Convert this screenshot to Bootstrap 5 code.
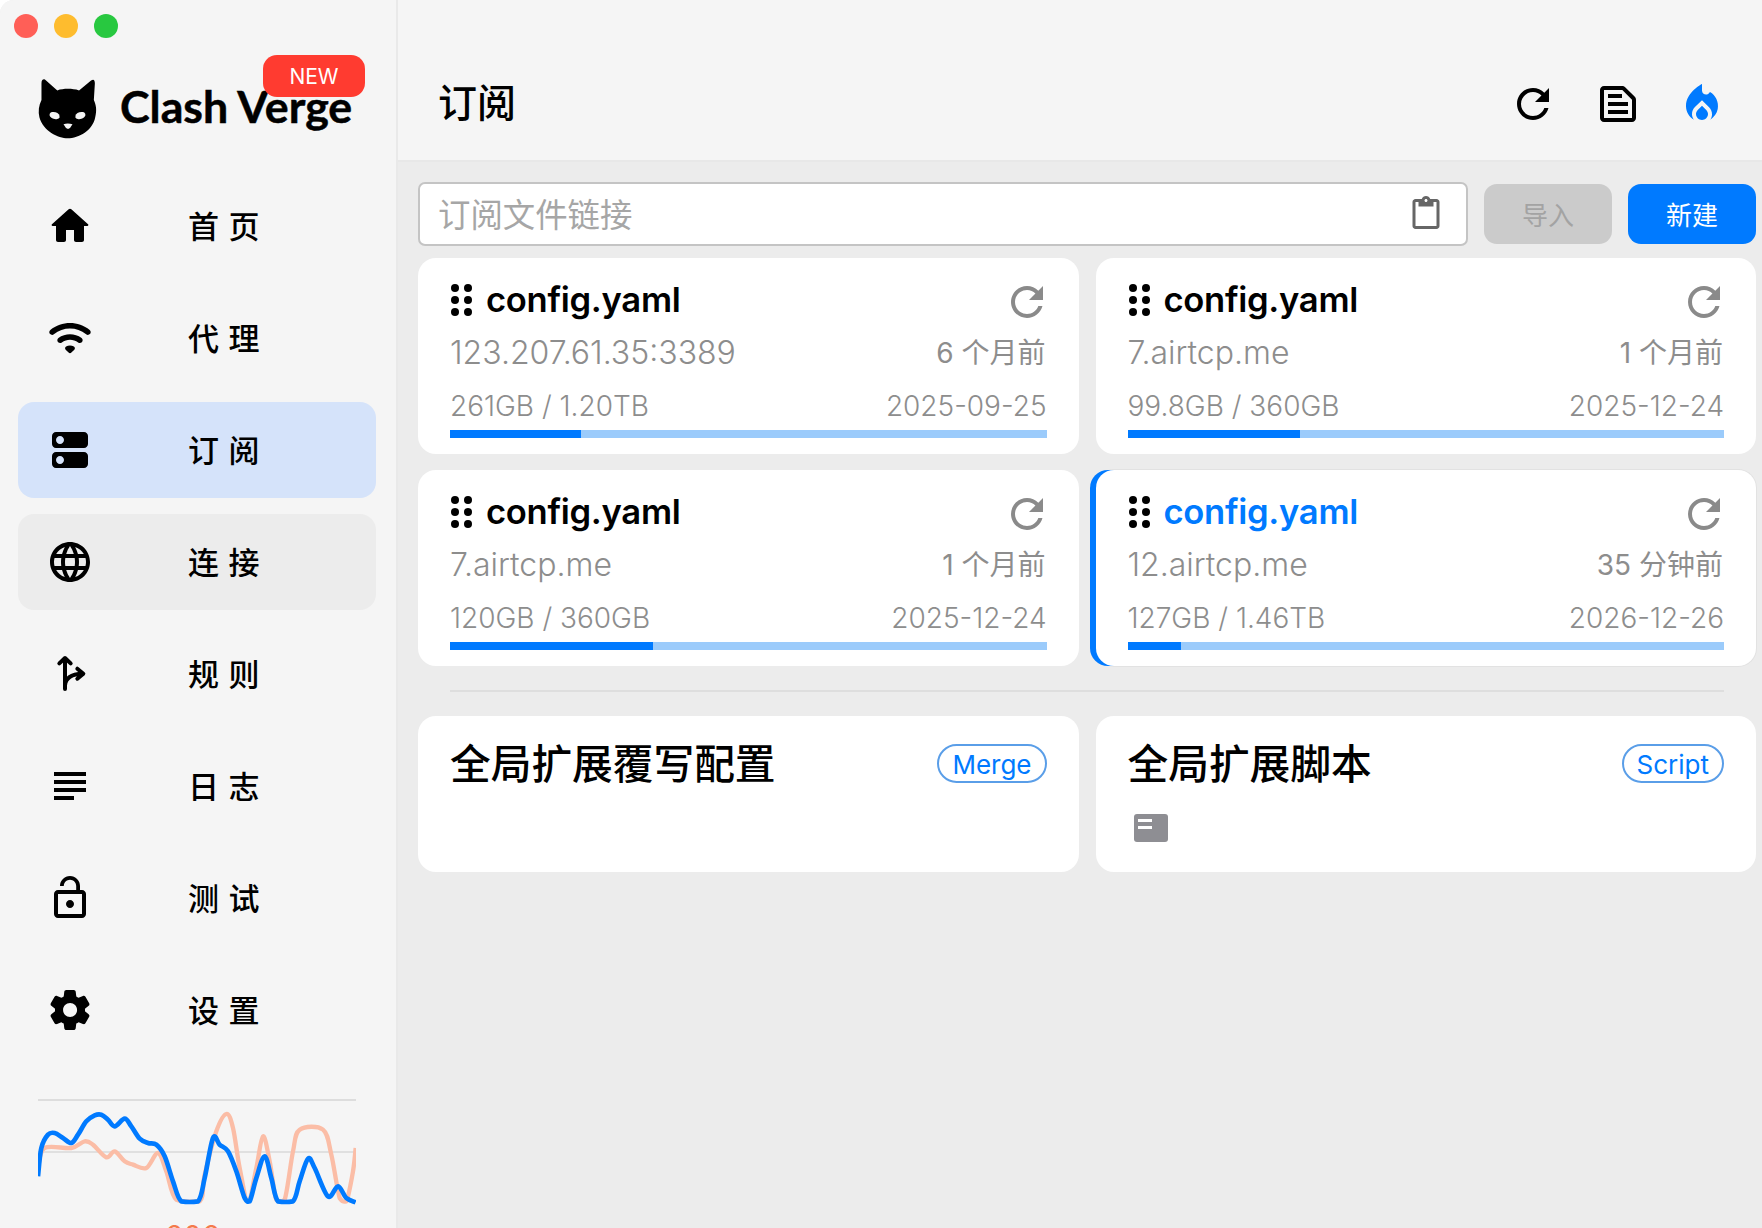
<!DOCTYPE html>
<html lang="zh-CN">
<head>
<meta charset="utf-8">
<title>Clash Verge</title>
<link href="https://cdn.jsdelivr.net/npm/bootstrap@5.3.0/dist/css/bootstrap.min.css" rel="stylesheet">
<style>
html,body{height:100%;margin:0;overflow:hidden;background:#fff}
body{font-family:Inter,"Noto Sans CJK SC",sans-serif;color:#000}
.app-shell{width:1762px;height:1228px;background:#ececec;border-top-left-radius:14px;overflow:hidden}
.side-pane{width:398px;flex:0 0 398px;background:#f5f5f5;border-right:2px solid #e9e9e9;padding:0 20px 0 18px;overflow:hidden}
.side-pane>*{flex-shrink:0}
.traffic{gap:16px;padding:14px 0 0 0;margin-left:-4px}
.traffic i{display:block;width:24px;height:24px;border-radius:50%}
.tl-r{background:#ff5f57}.tl-y{background:#febc2e}.tl-g{background:#28c840}
.brand-row{position:relative;height:140px;padding-top:40px;gap:21px;margin-left:19px}
.brand-name{font-family:Lato,sans-serif;font-weight:700;font-size:44.7px;line-height:56px;letter-spacing:0;white-space:nowrap;margin-top:0;-webkit-text-stroke:.5px #000}
.new-flag{position:absolute;left:226px;top:17px;width:102px;height:42px;border-radius:14px;background:#ff3b30;color:#fff;font-size:21px;line-height:44px;text-align:center}
.nav-stack{gap:16px}
.nav-entry{height:96px;border-radius:16px;padding-left:28px;color:#000;text-decoration:none}
.nav-entry.is-on{background:#d5e3fa}
.nav-entry.is-hover{background:#ececec}
.nav-entry svg{width:48px;height:48px;flex:0 0 48px}
.nav-label{margin:-2px 0 0 94px;font-family:"Noto Sans CJK SC",sans-serif;font-size:31px;font-weight:500;letter-spacing:9.5px;white-space:nowrap;line-height:40px}
.graph-box{margin:41px 20px 0 20px;border-top:2px solid #ddd;height:125px;position:relative}
.graph-box svg{display:block;width:318px;height:122px}
.rate-num{color:#f47a4b;font-size:28px;line-height:28px;margin-top:-2px;text-align:center;letter-spacing:1px;margin-left:-8px}
.top-bar{height:162px;background:#f5f5f5;border-bottom:2px solid #e8e8e8;padding:77px 32px 0 41px}
.top-row{height:54px}
.page-name{font-family:"Noto Sans CJK SC",sans-serif;font-size:39px;font-weight:500;line-height:54px;margin:-8px 0 0 -1px}
.top-tools{gap:36.5px;margin-right:4px}
.top-tools svg{width:48px;height:48px}
.work-pane{padding:20px 6px 0 20px}
.url-row{gap:16px}
.url-box{flex:1 1 auto;height:64px;background:#fff;border:2px solid #c4c4c4;border-radius:7px;padding:0 22px 0 18px}
.url-box input{border:0;outline:0;background:transparent;font-family:"Noto Sans CJK SC",sans-serif;font-size:32.4px;width:100%;padding:0 0 2px;color:#000}
.url-box input::placeholder{color:#a6a6a6;opacity:1}
.url-box svg{width:36px;height:36px;flex:0 0 36px}
.act-btn{width:128px;height:60px;flex:0 0 128px;border:0;border-radius:13px;font-family:"Noto Sans CJK SC",sans-serif;font-size:26px;padding:0;line-height:60px}
.act-btn.off-btn,.act-btn.off-btn:disabled{background:#cbcbcb;color:#a3a3a3;opacity:1}
.act-btn.new-btn{background:#007aff;color:#fff}
.deck{--bs-gutter-x:17px;--bs-gutter-y:16px}
.deck-wrap{margin-top:12px}
.sub-tile{background:#fff;border:0;border-radius:18px;height:196px;padding:20px 32px 0 32px}
.sub-tile.is-current{box-shadow:-6px 0 0 #007aff,0 0 0 1px #e2e2e2}
.tile-head{height:48px}
.grip{display:grid;grid-template-columns:8px 8px;gap:4px 5px;width:21px;margin:-5px 14px 0 1px}
.grip i{display:block;width:8px;height:8px;border-radius:50%;background:#000}
.tile-name{font-size:34.6px;font-weight:600;line-height:48px;letter-spacing:-.3px;color:#000;margin-top:-7px}
.is-current .tile-name{color:#007aff}
.tile-head svg{width:48px;height:48px;margin:-1px -4px 0 0}
.tile-l2{margin-top:7px;height:40px;line-height:40px;color:#8d8d8d;font-size:32px;font-weight:300}
.tile-l2 .r{font-size:28px;font-weight:400;margin-right:1px}
.tile-l3{margin-top:15px;height:36px;line-height:36px;color:#8d8d8d;font-size:28px;font-weight:300}
.meter{height:8px;margin-top:6px;background:#9bcbfb;border-radius:0;--bs-progress-bar-bg:#007aff}
.rule-line{height:2px;background:#dedede;margin:24px 32px 24px 32px}
.ext-tile{background:#fff;border-radius:18px;height:156px;padding:24px 32px 0 32px}
.ext-name{font-family:"Noto Sans CJK SC",sans-serif;font-size:40.7px;font-weight:500;line-height:48px;margin-top:-2px}
.chip-tag{border:2px solid #5a9ee8;border-radius:20px;height:39px;line-height:37px;color:#007aff;font-size:26px;font-weight:400;padding:0 13px;background:#fff;margin-top:4px}
.doc-mark{margin:28px 0 0 6px;width:34px;height:28px;display:block}
</style>
</head>
<body>
<div class="app-shell d-flex">
  <aside class="side-pane d-flex flex-column">
    <div class="traffic d-flex"><i class="tl-r"></i><i class="tl-y"></i><i class="tl-g"></i></div>
    <div class="brand-row d-flex align-items-start">
      <svg width="62" height="62" viewBox="23 26 180 180" class="flex-shrink-0" aria-hidden="true">
        <path fill="#000" d="M46 30 Q36 28 36 42 L36 90 C28 105 26 125 30 140 C40 180 85 201 112 201 C145 201 185 178 192 140 C197 120 195 105 188 90 L191 42 Q191 26 180 33 L145 62 C125 56 100 56 82 62 Z"/>
        <ellipse cx="74" cy="135" rx="15" ry="10" fill="#f5f5f5" transform="rotate(18 74 135)"/>
        <ellipse cx="149" cy="135" rx="15" ry="10" fill="#f5f5f5" transform="rotate(-18 149 135)"/>
        <path fill="#f5f5f5" d="M100 160 Q112 156 126 160 Q120 172 113 174 Q106 172 100 160 Z"/>
      </svg>
      <span class="brand-name">Clash Verge</span>
      <span class="new-flag">NEW</span>
    </div>
    <nav class="nav-stack d-flex flex-column">
      <a class="nav-entry d-flex align-items-center" href="#"><svg viewBox="0 0 24 24"><path d="M10 19v-5h4v5c0 .55.45 1 1 1h3c.55 0 1-.45 1-1v-7h1.7c.46 0 .68-.57.33-.87L12.67 3.6c-.38-.34-.96-.34-1.34 0l-8.36 7.53c-.34.3-.13.87.33.87H5v7c0 .55.45 1 1 1h3c.55 0 1-.45 1-1z"/></svg><span class="nav-label">首页</span></a>
      <a class="nav-entry d-flex align-items-center" href="#"><svg viewBox="0 0 24 24"><path d="M2.06 10.06c.51.51 1.32.56 1.87.1 4.67-3.84 11.45-3.84 16.13-.01.56.46 1.38.42 1.89-.09.59-.59.55-1.57-.1-2.1-5.71-4.67-13.97-4.67-19.69 0-.65.52-.7 1.5-.1 2.1zm7.76 7.76l1.47 1.47c.39.39 1.02.39 1.41 0l1.47-1.47c.47-.47.37-1.28-.23-1.59-1.22-.63-2.68-.63-3.91 0-.57.31-.68 1.12-.21 1.59zm-3.73-3.73c.49.49 1.26.54 1.83.13 2.44-1.73 5.72-1.73 8.16 0 .57.4 1.34.36 1.83-.13l.01-.01c.6-.6.56-1.62-.13-2.11-3.44-2.49-8.13-2.49-11.58 0-.69.5-.73 1.51-.12 2.12z"/></svg><span class="nav-label">代理</span></a>
      <a class="nav-entry is-on d-flex align-items-center" href="#"><svg viewBox="0 0 24 24"><path d="M19 13H5c-1.1 0-2 .9-2 2v4c0 1.1.9 2 2 2h14c1.1 0 2-.9 2-2v-4c0-1.1-.9-2-2-2zM7 19c-1.1 0-2-.9-2-2s.9-2 2-2 2 .9 2 2-.9 2-2 2zM19 3H5c-1.1 0-2 .9-2 2v4c0 1.1.9 2 2 2h14c1.1 0 2-.9 2-2V5c0-1.1-.9-2-2-2zM7 9c-1.1 0-2-.9-2-2s.9-2 2-2 2 .9 2 2-.9 2-2 2z"/></svg><span class="nav-label">订阅</span></a>
      <a class="nav-entry is-hover d-flex align-items-center" href="#"><svg viewBox="0 0 24 24"><path d="M11.99 2C6.47 2 2 6.48 2 12s4.47 10 9.99 10C17.52 22 22 17.52 22 12S17.52 2 11.99 2zm6.93 6h-2.95c-.32-1.25-.78-2.45-1.38-3.56 1.84.63 3.37 1.91 4.33 3.56zM12 4.04c.83 1.2 1.48 2.53 1.91 3.96h-3.82c.43-1.43 1.08-2.76 1.91-3.96zM4.26 14C4.1 13.36 4 12.69 4 12s.1-1.36.26-2h3.38c-.08.66-.14 1.32-.14 2s.06 1.34.14 2H4.26zm.82 2h2.95c.32 1.25.78 2.45 1.38 3.56-1.84-.63-3.37-1.9-4.33-3.56zm2.95-8H5.08c.96-1.66 2.49-2.93 4.33-3.56C8.81 5.55 8.35 6.75 8.03 8zM12 19.96c-.83-1.2-1.48-2.53-1.91-3.96h3.82c-.43 1.43-1.08 2.76-1.91 3.96zM14.34 14H9.66c-.09-.66-.16-1.32-.16-2s.07-1.35.16-2h4.68c.09.65.16 1.32.16 2s-.07 1.34-.16 2zm.25 5.56c.6-1.11 1.06-2.31 1.38-3.56h2.95c-.96 1.65-2.49 2.93-4.33 3.56zM16.36 14c.08-.66.14-1.32.14-2s-.06-1.34-.14-2h3.38c.16.64.26 1.31.26 2s-.1 1.36-.26 2h-3.38z"/></svg><span class="nav-label">连接</span></a>
      <a class="nav-entry d-flex align-items-center" href="#"><svg viewBox="18 18 144 144"><path fill="none" stroke="#000" stroke-width="12" stroke-linecap="round" stroke-linejoin="round" d="M58 58 L75 42 L92 58 M75 44 V135 M75 125 C76 102 92 90 128 89 M112 74 L130 89 L112 104"/></svg><span class="nav-label">规则</span></a>
      <a class="nav-entry d-flex align-items-center" href="#"><svg viewBox="0 0 24 24"><path d="M14 17H4v2h10v-2zm6-8H4v2h16V9zM4 15h16v-2H4v2zM4 5v2h16V5H4z"/></svg><span class="nav-label">日志</span></a>
      <a class="nav-entry d-flex align-items-center" href="#"><svg viewBox="0 0 24 24"><path d="M12 17c1.1 0 2-.9 2-2s-.9-2-2-2-2 .9-2 2 .9 2 2 2zm6-9h-1V6c0-2.76-2.24-5-5-5S7 3.24 7 6h1.9c0-1.71 1.39-3.1 3.1-3.1 1.71 0 3.1 1.39 3.1 3.1v2H6c-1.1 0-2 .9-2 2v10c0 1.1.9 2 2 2h12c1.1 0 2-.9 2-2V10c0-1.1-.9-2-2-2zm0 12H6V10h12v10z"/></svg><span class="nav-label">测试</span></a>
      <a class="nav-entry d-flex align-items-center" href="#"><svg viewBox="0 0 24 24"><path d="M19.5 12c0-.23-.01-.45-.03-.68l1.86-1.41c.4-.3.51-.86.26-1.3l-1.87-3.23c-.25-.44-.79-.62-1.25-.42l-2.15.91c-.37-.26-.76-.49-1.17-.68l-.29-2.31c-.06-.5-.49-.88-.99-.88h-3.73c-.51 0-.94.38-1 .88l-.29 2.31c-.41.19-.8.42-1.17.68l-2.15-.91c-.46-.2-1-.02-1.25.42L2.41 8.62c-.25.44-.14.99.26 1.3l1.86 1.41c-.02.22-.03.44-.03.67s.01.45.03.68l-1.86 1.41c-.4.3-.51.86-.26 1.3l1.87 3.23c.25.44.79.62 1.25.42l2.15-.91c.37.26.76.49 1.17.68l.29 2.31c.06.5.49.88.99.88h3.73c.5 0 .93-.38.99-.88l.29-2.31c.41-.19.8-.42 1.17-.68l2.15.91c.46.2 1 .02 1.25-.42l1.87-3.23c.25-.44.14-.99-.26-1.3l-1.86-1.41c.03-.23.04-.45.04-.68zm-7.46 3.5c-1.93 0-3.5-1.57-3.5-3.5s1.57-3.5 3.5-3.5 3.5 1.57 3.5 3.5-1.57 3.5-3.5 3.5z"/></svg><span class="nav-label">设置</span></a>
    </nav>
    <div class="graph-box">
      <svg viewBox="115 899 954 366" preserveAspectRatio="none" aria-hidden="true">
        <line x1="115" x2="1068" y1="1052" y2="1052" stroke="#d8d8d8" stroke-width="4"/>
        <path id="curveB" fill="none" stroke="#fbbda6" stroke-width="13" stroke-linecap="butt" stroke-linejoin="round"/>
        <path id="curveA" fill="none" stroke="#007aff" stroke-width="14" stroke-linecap="butt" stroke-linejoin="round"/>
      </svg>
    </div>
    <div class="rate-num">606</div>
  </aside>

  <div class="flex-grow-1 d-flex flex-column" style="min-width:0">
    <header class="top-bar flex-shrink-0">
      <div class="top-row d-flex align-items-center justify-content-between">
        <span class="page-name">订阅</span>
        <div class="top-tools d-flex align-items-center">
          <svg viewBox="0 0 24 24"><path d="M17.65 6.35C16.2 4.9 14.21 4 12 4c-4.42 0-7.99 3.58-7.99 8s3.57 8 7.99 8c3.73 0 6.84-2.55 7.73-6h-2.08c-.82 2.33-3.04 4-5.65 4-3.31 0-6-2.69-6-6s2.69-6 6-6c1.66 0 3.14.69 4.22 1.78L13 11h7V4l-2.35 2.35z"/></svg>
          <svg viewBox="0 0 24 24"><path d="M14.17 5L19 9.83V19H5V5h9.17m0-2H5c-1.1 0-2 .9-2 2v14c0 1.1.9 2 2 2h14c1.1 0 2-.9 2-2V9.83c0-.53-.21-1.04-.59-1.41l-4.83-4.83c-.37-.38-.88-.59-1.41-.59zM7 15h10v2H7v-2zm0-4h10v2H7v-2zm0-4h7v2H7V7z"/></svg>
          <svg viewBox="0 0 24 24"><path fill="#007aff" d="M12 12.9l-2.13 2.09C9.31 15.55 9 16.28 9 17.06 9 18.68 10.35 20 12 20s3-1.32 3-2.94c0-.78-.31-1.52-.87-2.07L12 12.9zM16 6l-.44.55C14.38 8.02 12 7.19 12 5.3V2S4 6 4 13c0 2.92 1.56 5.47 3.89 6.86C7.33 19.07 7 18.1 7 17.06c0-1.32.52-2.56 1.47-3.5L12 10.1l3.53 3.47c.95.93 1.47 2.17 1.47 3.5 0 1.02-.31 1.96-.85 2.75 1.89-1.15 3.29-3.06 3.71-5.3.66-3.55-1.07-6.9-3.86-8.52z"/></svg>
        </div>
      </div>
    </header>
    <main class="work-pane flex-grow-1">
      <div class="url-row d-flex align-items-center">
        <div class="url-box d-flex align-items-center">
          <input type="text" placeholder="订阅文件链接" aria-label="订阅文件链接">
          <svg viewBox="0 0 24 24"><path fill="#666" d="M19 2h-4.18C14.4.84 13.3 0 12 0c-1.3 0-2.4.84-2.82 2H5c-1.1 0-2 .9-2 2v16c0 1.1.9 2 2 2h14c1.1 0 2-.9 2-2V4c0-1.1-.9-2-2-2zm-7 0c.55 0 1 .45 1 1s-.45 1-1 1-1-.45-1-1 .45-1 1-1zm7 18H5V4h2v3h10V4h2v16z"/></svg>
        </div>
        <button class="btn act-btn off-btn" disabled>导入</button>
        <button class="btn act-btn new-btn">新建</button>
      </div>

      <div class="deck-wrap">
        <div class="row deck" id="deck"></div>
      </div>
      <div class="rule-line"></div>
      <div class="row deck">
        <div class="col-6">
          <div class="ext-tile">
            <div class="d-flex justify-content-between align-items-start">
              <span class="ext-name">全局扩展覆写配置</span><span class="chip-tag">Merge</span>
            </div>
          </div>
        </div>
        <div class="col-6">
          <div class="ext-tile">
            <div class="d-flex justify-content-between align-items-start">
              <span class="ext-name">全局扩展脚本</span><span class="chip-tag">Script</span>
            </div>
            <svg class="doc-mark" viewBox="0 0 34 28"><rect width="34" height="28" rx="3" fill="#8e8e93"/><rect x="4" y="5" width="14" height="3" fill="#fff"/><rect x="4" y="12" width="14" height="3" fill="#fff"/></svg>
          </div>
        </div>
      </div>
    </main>
  </div>
</div>
<script src="https://cdn.jsdelivr.net/npm/bootstrap@5.3.0/dist/js/bootstrap.bundle.min.js"></script>
<script>
function smooth(p){
  var d='M'+p[0][0]+' '+p[0][1];
  for(var i=0;i<p.length-1;i++){
    var a=p[Math.max(i-1,0)],b=p[i],c=p[i+1],e=p[Math.min(i+2,p.length-1)];
    d+=' C'+(b[0]+(c[0]-a[0])/6)+' '+Math.min(1202,b[1]+(c[1]-a[1])/6)+' '+(c[0]-(e[0]-b[0])/6)+' '+Math.min(1202,c[1]-(e[1]-b[1])/6)+' '+c[0]+' '+c[1];
  }
  return d;
}
document.getElementById('curveA').setAttribute('d',smooth([[115,1125],[125,1040],[145,1000],[165,995],[190,1010],[215,1025],[235,1000],[260,960],[285,942],[305,940],[325,955],[345,975],[375,952],[395,975],[420,1012],[445,1025],[470,1030],[495,1065],[520,1140],[545,1200],[595,1200],[615,1130],[640,1010],[660,1030],[685,1050],[710,1110],[735,1190],[750,1200],[770,1130],[795,1065],[815,1130],[835,1200],[880,1200],[900,1140],[925,1072],[945,1100],[985,1185],[1015,1155],[1040,1190],[1068,1203]]));
document.getElementById('curveB').setAttribute('d',smooth([[115,1100],[135,1040],[215,1040],[255,1020],[280,1030],[320,1068],[345,1050],[375,1080],[400,1090],[440,1100],[475,1055],[500,1110],[530,1195],[600,1200],[615,1120],[650,990],[680,938],[700,980],[720,1100],[745,1200],[770,1100],[790,1005],[810,1080],[830,1195],[855,1195],[880,1050],[900,985],[970,985],[995,1060],[1020,1190],[1040,1200],[1060,1110],[1068,1040]]));
var tiles=[
 ['7','123.207.61.35:3389','6 个月前','261GB / 1.20TB','2025-09-25',22,false],
 ['7','7.airtcp.me','1 个月前','99.8GB / 360GB','2025-12-24',29,false],
 ['7','7.airtcp.me','1 个月前','120GB / 360GB','2025-12-24',34,false],
 ['7','12.airtcp.me','35 分钟前','127GB / 1.46TB','2026-12-26',9,true]];
var grip='<span class="grip">'+'<i></i>'.repeat(6)+'</span>';
var icon='<svg viewBox="0 0 24 24"><path fill="#8a8a8a" d="M17.65 6.35C16.2 4.9 14.21 4 12 4c-4.42 0-7.99 3.58-7.99 8s3.57 8 7.99 8c3.73 0 6.84-2.55 7.73-6h-2.08c-.82 2.33-3.04 4-5.65 4-3.31 0-6-2.69-6-6s2.69-6 6-6c1.66 0 3.14.69 4.22 1.78L13 11h7V4l-2.35 2.35z"/></svg>';
document.getElementById('deck').innerHTML=tiles.map(function(t){
 return '<div class="col-6"><div class="sub-tile'+(t[6]?' is-current':'')+'">'+
 '<div class="tile-head d-flex align-items-center">'+grip+'<span class="tile-name flex-grow-1">config.yaml</span>'+icon+'</div>'+
 '<div class="tile-l2 d-flex justify-content-between"><span>'+t[1]+'</span><span class="r">'+t[2]+'</span></div>'+
 '<div class="tile-l3 d-flex justify-content-between"><span>'+t[3]+'</span><span>'+t[4]+'</span></div>'+
 '<div class="progress meter"><div class="progress-bar" style="width:'+t[5]+'%"></div></div></div></div>';
}).join('');
</script>
</body>
</html>
